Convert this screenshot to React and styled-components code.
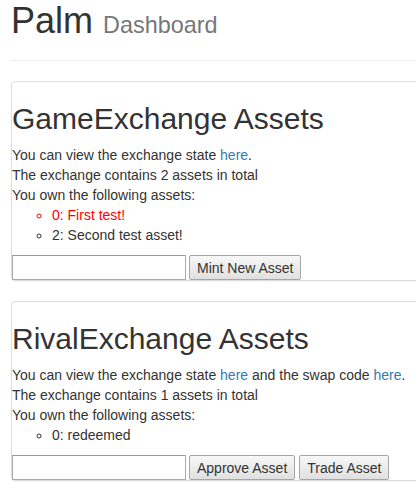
import React from "react";
import styled, { createGlobalStyle } from "styled-components";

const Global = createGlobalStyle`
  html, body { margin: 0; padding: 0; overflow: hidden; background: #fff; }
  body {
    font-family: "Liberation Sans", Arial, Helvetica, sans-serif;
    font-size: 14px;
    line-height: 20px;
    color: #333;
  }
  * { box-sizing: border-box; }
`;

const Container = styled.div`
  width: 760px;
  margin-left: 11px;
`;

const PageHeader = styled.div`
  padding-bottom: 9px;
  margin: 0 0 20px;
  border-bottom: 1px solid #eee;
`;

const Title = styled.h1`
  margin: 1px 0 10px;
  font-size: 36px;
  line-height: 40px;
  font-weight: 500;
  color: #333;
`;

const Small = styled.small`
  font-size: 65%;
  font-weight: 400;
  line-height: 1;
  color: #777;
`;

const Panel = styled.section`
  border: 1px solid #ddd;
  border-radius: 4px;
  box-shadow: 0 1px 1px rgba(0, 0, 0, 0.05);
  margin-bottom: 20px;
`;

const Heading = styled.h2`
  margin: 20px 0 10px;
  font-size: 30px;
  line-height: 33px;
  font-weight: 500;
  color: #333;
`;

const Line = styled.div`
  line-height: 20px;
`;

const Link = styled.a`
  color: #337ab7;
  text-decoration: none;
`;

const List = styled.ul`
  margin: 0 0 10px;
  padding-left: 40px;
  list-style-type: circle;
`;

const Item = styled.li`
  color: ${(p) => (p.$alert ? "#ff0000" : "#333")};
`;

const FormRow = styled.div`
  display: flex;
  align-items: stretch;
  height: 25px;
  gap: 3px;
`;

const Input = styled.input`
  width: 174px;
  height: 25px;
  margin: 0;
  border: 1px solid #a9a9a9;
  border-top-color: #999;
  padding: 1px 2px;
  font: inherit;
  background: #fff;
`;

const Button = styled.button`
  height: 25px;
  padding: 0 7px;
  margin-left: ${(p) => (p.$spaced ? "1px" : "0")};
  border: 1px solid #a6a6a6;
  border-radius: 2px;
  background: linear-gradient(#f8f8f8, #e0e0e0);
  color: #333;
  font-family: "Liberation Sans", Arial, sans-serif;
  font-size: 14px;
  line-height: 20px;
  cursor: pointer;
`;

export default function App() {
  return (
    <>
      <Global />
      <Container>
        <PageHeader>
          <Title>
            Palm <Small>Dashboard</Small>
          </Title>
        </PageHeader>

        <Panel>
          <Heading>GameExchange Assets</Heading>
          <Line>
            You can view the exchange state <Link href="#">here</Link>.
          </Line>
          <Line>The exchange contains 2 assets in total</Line>
          <Line>You own the following assets:</Line>
          <List>
            <Item $alert>0: First test!</Item>
            <Item>2: Second test asset!</Item>
          </List>
          <FormRow>
            <Input type="text" />
            <Button>Mint New Asset</Button>
          </FormRow>
        </Panel>

        <Panel>
          <Heading>RivalExchange Assets</Heading>
          <Line>
            You can view the exchange state <Link href="#">here</Link> and the
            swap code <Link href="#">here</Link>.
          </Line>
          <Line>The exchange contains 1 assets in total</Line>
          <Line>You own the following assets:</Line>
          <List>
            <Item>0: redeemed</Item>
          </List>
          <FormRow>
            <Input type="text" />
            <Button>Approve Asset</Button>
            <Button $spaced>Trade Asset</Button>
          </FormRow>
        </Panel>
      </Container>
    </>
  );
}
